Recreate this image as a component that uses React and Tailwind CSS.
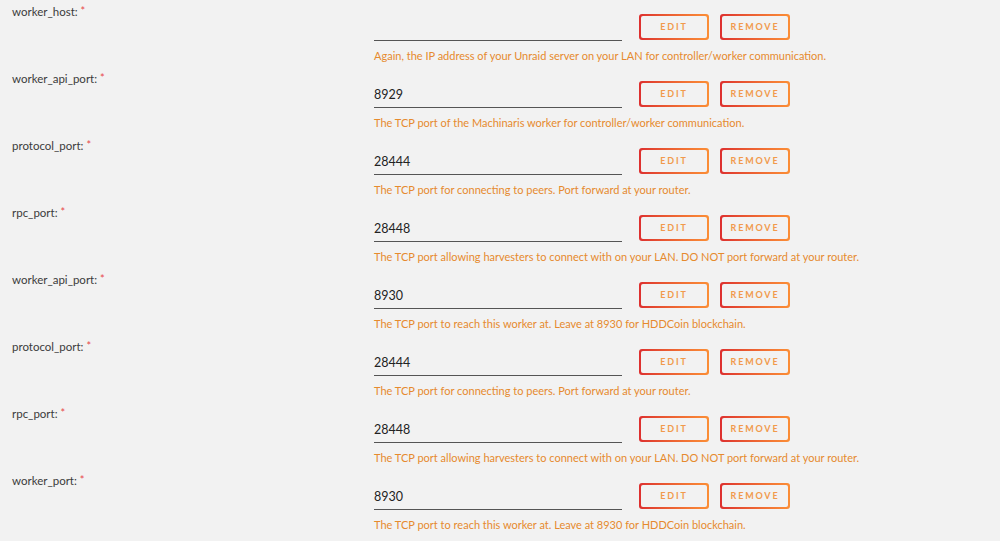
import React from 'react';

const fields = [
    { name: 'worker_host', value: '', help: 'Again, the IP address of your Unraid server on your LAN for controller/worker communication.' },
    { name: 'worker_api_port', value: '8929', help: 'The TCP port of the Machinaris worker for controller/worker communication.' },
    { name: 'protocol_port', value: '28444', help: 'The TCP port for connecting to peers. Port forward at your router.' },
    { name: 'rpc_port', value: '28448', help: 'The TCP port allowing harvesters to connect with on your LAN. DO NOT port forward at your router.' },
    { name: 'worker_api_port', value: '8930', help: 'The TCP port to reach this worker at. Leave at 8930 for HDDCoin blockchain.' },
    { name: 'protocol_port', value: '28444', help: 'The TCP port for connecting to peers. Port forward at your router.' },
    { name: 'rpc_port', value: '28448', help: 'The TCP port allowing harvesters to connect with on your LAN. DO NOT port forward at your router.' },
    { name: 'worker_port', value: '8930', help: 'The TCP port to reach this worker at. Leave at 8930 for HDDCoin blockchain.' },
];

const GradientButton = ({ children }) => (
    <button className="w-[70px] h-[26px] p-[2px] rounded-[3px] bg-gradient-to-r from-[#dd2f2f] to-[#fb8e36]">
        <span className="flex w-full h-full items-center justify-center rounded-[2px] bg-[#f2f2f2] text-[9px] font-bold tracking-[0.2em] text-[#f19a4c]">
            {children}
        </span>
    </button>
);

const FieldRow = ({ field }) => (
    <div className="flex h-[67px]">
        <div className="w-[374px] pl-[12px] pt-[3px] text-[11.5px] leading-[18px] text-[#3b3b3b]">
            {field.name}: <span className="relative -top-[1px] text-[11px] text-[#e8484a]">*</span>
        </div>
        <div className="pt-[14px]">
            <div className="flex items-stretch h-[26px]">
                <input
                    readOnly
                    value={field.value}
                    className="w-[248px] h-[27px] pt-[1px] border-b border-[#555] bg-transparent text-[12.5px] text-[#222] outline-none"
                />
                <div className="flex gap-[11px] ml-[17px]">
                    <GradientButton>EDIT</GradientButton>
                    <GradientButton>REMOVE</GradientButton>
                </div>
            </div>
            <p className="mt-[8px] text-[11px] leading-[16px] text-[#e68a2e] whitespace-nowrap">{field.help}</p>
        </div>
    </div>
);

export default function App() {
    return (
        <div className="w-full min-h-screen bg-[#f2f2f2]" style={{ fontFamily: 'Lato, sans-serif' }}>
            {fields.map((f, i) => (
                <FieldRow key={i} field={f} />
            ))}
        </div>
    );
}
